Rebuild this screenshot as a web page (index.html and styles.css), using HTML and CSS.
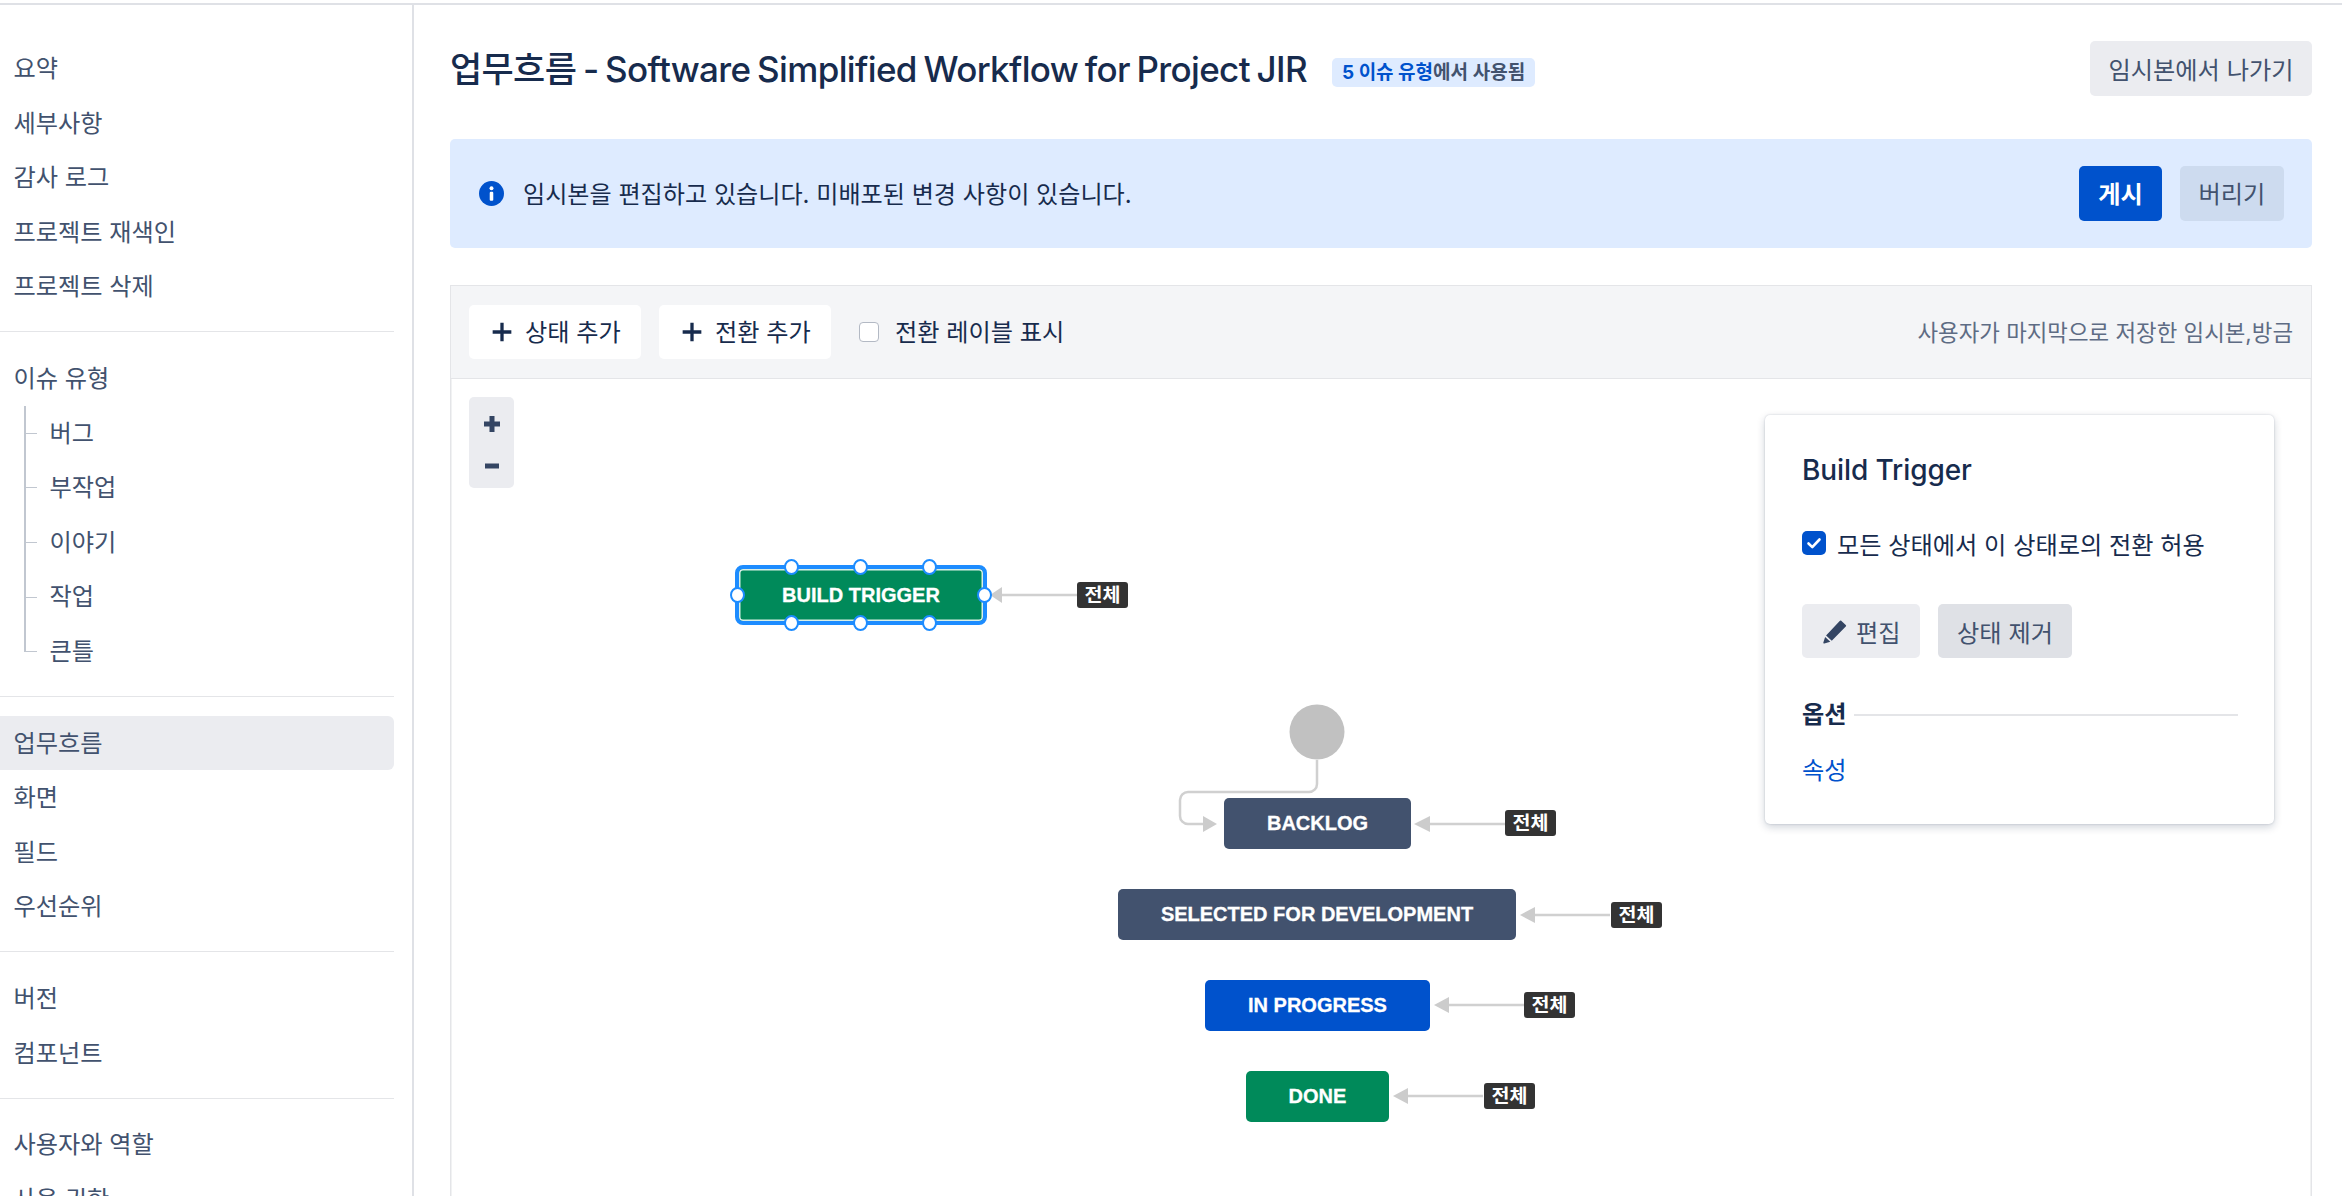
FILE: index.html
```html
<!DOCTYPE html>
<html lang="ko">
<head>
  <meta charset="UTF-8">
  <title>업무흐름 - Software Simplified Workflow for Project JIR</title>
  <link rel="stylesheet" href="styles.css">
</head>
<body>

  <div class="topline"></div>

  <div class="page">
    <nav class="sidebar">
      <ul class="nav-group">
        <li>요약</li>
        <li>세부사항</li>
        <li>감사 로그</li>
        <li>프로젝트 재색인</li>
        <li>프로젝트 삭제</li>
      </ul>
      <ul class="nav-group">
        <li>이슈 유형</li>
        <li class="sub">버그</li>
        <li class="sub">부작업</li>
        <li class="sub">이야기</li>
        <li class="sub">작업</li>
        <li class="sub sub-last">큰틀</li>
      </ul>
      <ul class="nav-group">
        <li class="selected">업무흐름</li>
        <li>화면</li>
        <li>필드</li>
        <li>우선순위</li>
      </ul>
      <ul class="nav-group">
        <li>버전</li>
        <li>컴포넌트</li>
      </ul>
      <ul class="nav-group">
        <li>사용자와 역할</li>
        <li>사용 권한</li>
      </ul>
    </nav>

    <main class="main">
      <header class="header">
        <h1 class="title">업무흐름 - Software Simplified Workflow for Project JIR</h1>
        <span class="badge"><b>5 이슈 유형</b>에서 사용됨</span>
        <button class="btn btn-exit">임시본에서 나가기</button>
      </header>

      <div class="banner">
        <svg class="info-icon" viewBox="0 0 24 24">
          <circle cx="12" cy="12" r="12" fill="#0052cc"/>
          <rect x="10.3" y="10.4" width="3.4" height="8.6" rx="1" fill="#fff"/>
          <circle cx="12" cy="7" r="1.9" fill="#fff"/>
        </svg>
        <span class="banner-text">임시본을 편집하고 있습니다. 미배포된 변경 사항이 있습니다.</span>
        <button class="btn btn-primary">게시</button>
        <button class="btn btn-discard">버리기</button>
      </div>

      <div class="toolbar">
        <button class="btn btn-white">
          <svg class="plus-icon" viewBox="0 0 20 20"><path d="M10 1.5v17M1.5 10h17"/></svg>
          상태 추가
        </button>
        <button class="btn btn-white">
          <svg class="plus-icon" viewBox="0 0 20 20"><path d="M10 1.5v17M1.5 10h17"/></svg>
          전환 추가
        </button>
        <label class="show-labels"><span class="checkbox"></span>전환 레이블 표시</label>
        <span class="saved-note">사용자가 마지막으로 저장한 임시본,방금</span>
      </div>

      <div class="canvas">
        <div class="zoom-box">
          <svg class="zoom-plus" viewBox="0 0 18 18"><path d="M9 1v16M1 9h16"/></svg>
          <svg class="zoom-minus" viewBox="0 0 16 6"><path d="M1 3h14"/></svg>
        </div>

        <svg class="edges" width="1860" height="817">
          <path class="edge" d="M867 381v24a8 8 0 0 1-8 8H738a8 8 0 0 0-8 8v16a8 8 0 0 0 8 8h17"/>
          <path class="edge" d="M552 216h75"/>
          <path class="edge" d="M975 445h80"/>
          <path class="edge" d="M1080 536h80"/>
          <path class="edge" d="M994 626h80"/>
          <path class="edge" d="M953 717h80"/>
          <path class="head" d="M540 216l12-8v16z"/>
          <path class="head" d="M767 445l-14-8v16z"/>
          <path class="head" d="M964 445l16-8v16z"/>
          <path class="head" d="M1070 536l15-8v16z"/>
          <path class="head" d="M984 626l15-8v16z"/>
          <path class="head" d="M943 717l15-8v16z"/>
          <circle cx="867" cy="353" r="27.5" fill="#c1c1c1"/>
        </svg>

        <div class="node node-trigger">BUILD TRIGGER
          <i class="handle h1"></i><i class="handle h2"></i><i class="handle h3"></i>
          <i class="handle h4"></i><i class="handle h5"></i><i class="handle h6"></i>
          <i class="handle h7"></i><i class="handle h8"></i>
        </div>
        <div class="node node-backlog">BACKLOG</div>
        <div class="node node-selected">SELECTED FOR DEVELOPMENT</div>
        <div class="node node-progress">IN PROGRESS</div>
        <div class="node node-done">DONE</div>

        <span class="all-label l1">전체</span>
        <span class="all-label l2">전체</span>
        <span class="all-label l3">전체</span>
        <span class="all-label l4">전체</span>
        <span class="all-label l5">전체</span>

        <aside class="panel">
          <h3 class="panel-title">Build Trigger</h3>
          <div class="panel-check">
            <svg class="check-icon" viewBox="0 0 24 24">
              <rect width="24" height="24" rx="5" fill="#0052cc"/>
              <path d="M6.5 12.5l3.8 3.6 7.2-7.6" fill="none" stroke="#fff" stroke-width="2.6" stroke-linecap="round" stroke-linejoin="round"/>
            </svg>
            모든 상태에서 이 상태로의 전환 허용
          </div>
          <div class="panel-actions">
            <button class="btn btn-edit">
              <svg class="pencil-icon" viewBox="0 0 24 24"><path d="M18.2 1.5l4.6 4.2c.5.5.5 1.1 0 1.6L9.4 20.9 3.9 15.9 17 2c.3-.5.8-.7 1.2-.5zM3 17.2l5 4.6-5.8 1.7c-.6.1-1-.3-.9-.9z"/></svg>
              편집
            </button>
            <button class="btn btn-remove">상태 제거</button>
          </div>
          <div class="panel-section"><b>옵션</b><span class="section-line"></span></div>
          <a class="panel-link">속성</a>
        </aside>
      </div>
    </main>
  </div>

</body>
</html>
```

FILE: styles.css
```css
* {
  box-sizing: border-box;
}

html, body {
  height: 100%;
}

body {
  margin: 0;
  overflow: hidden;
  background-color: #ffffff;
  color: #172b4d;
  font-family: Inter, "Noto Sans CJK KR", sans-serif;
}

button {
  font-family: inherit;
}

.topline {
  height: 5px;
  border-bottom: 2px solid #dfe1e6;
}

.page {
  display: flex;
  height: 1191px;
}

/* sidebar */
.sidebar {
  flex: 0 0 414px;
  padding: 36px 18px 0 0;
  border-right: 2px solid #dfe1e6;
  overflow: hidden;
}

.nav-group {
  list-style: none;
  margin: 0 0 18.5px;
  padding: 0 0 17.5px;
  border-bottom: 1.5px solid #e4e5e8;
}

.nav-group:last-child {
  border-bottom: none;
}

.nav-group li {
  position: relative;
  height: 54.6px;
  padding-left: 13.5px;
  line-height: 55px;
  font-size: 24.2px;
  color: #42526e;
  white-space: nowrap;
}

.nav-group .selected {
  background-color: #ebecf0;
  border-radius: 0 6px 6px 0;
}

.nav-group .sub {
  padding-left: 49.5px;
}

.sub::before {
  content: "";
  position: absolute;
  left: 24px;
  top: 0;
  width: 11px;
  height: 50%;
  border-left: 2px solid #c1c7d0;
  border-bottom: 1.5px solid #c1c7d0;
}

.sub::after {
  content: "";
  position: absolute;
  left: 24px;
  top: 50%;
  height: 50%;
  border-left: 2px solid #c1c7d0;
}

.sub-last::after {
  display: none;
}

/* main column */
.main {
  flex: 1;
  display: flex;
  flex-direction: column;
  padding: 0 30px 0 36px;
  min-width: 0;
}

.header {
  display: flex;
  align-items: center;
  height: 134px;
  padding-bottom: 8px;
}

.title {
  margin: 0 0 3px;
  font-size: 35px;
  font-weight: 500;
  letter-spacing: -0.65px;
  word-spacing: -2px;
  white-space: nowrap;
}

.badge {
  margin: 9px 0 0 25px;
  padding: 0 10px;
  height: 29px;
  line-height: 29px;
  border-radius: 5px;
  background-color: #deebff;
  color: #42526e;
  font-size: 19px;
  font-weight: 600;
  white-space: nowrap;
}

.badge b {
  color: #0052cc;
  font-weight: 700;
}

.btn {
  height: 55px;
  border: none;
  border-radius: 5px;
  padding: 0 20px;
  font-size: 24.2px;
  color: #42526e;
  background-color: #ebecf0;
  white-space: nowrap;
}

.btn-exit {
  margin-left: auto;
  width: 222px;
  padding: 0;
}

.banner {
  display: flex;
  align-items: center;
  flex: 0 0 109px;
  padding: 0 28px 0 29px;
  border-radius: 5px;
  background-color: #deebff;
}

.info-icon {
  width: 25px;
  height: 25px;
  margin-right: 19px;
}

.banner-text {
  flex: 1;
  padding-bottom: 2px;
  font-size: 24.1px;
  color: #172b4d;
}

.btn-primary {
  width: 83px;
  padding: 0 0 2px;
  background-color: #0052cc;
  color: #ffffff;
  font-weight: 600;
}

.btn-discard {
  width: 104px;
  padding: 0 0 2px;
  margin-left: 18px;
  background-color: #cddbef;
}

/* toolbar */
.toolbar {
  display: flex;
  align-items: center;
  flex: 0 0 94px;
  margin-top: 37px;
  padding: 0 18px;
  background-color: #f4f5f7;
  border: 1.5px solid #e4e5e8;
}

.btn-white {
  display: flex;
  align-items: center;
  width: 172px;
  height: 54px;
  padding: 0 0 3px 22px;
  margin-right: 18px;
  background-color: #ffffff;
  color: #172b4d;
}

.plus-icon {
  width: 22px;
  height: 22px;
  margin: 3px 12px 0 0;
  fill: none;
  stroke: #172b4d;
  stroke-width: 3;
}

.show-labels {
  display: flex;
  align-items: center;
  margin-left: 10px;
  padding-bottom: 3px;
  font-size: 24.2px;
  color: #172b4d;
}

.checkbox {
  width: 20px;
  height: 20px;
  margin: 3px 16px 0 0;
  background-color: #ffffff;
  border: 1.5px solid #b3b9c4;
  border-radius: 4px;
}

.saved-note {
  margin-left: auto;
  padding-bottom: 3px;
  font-size: 22.4px;
  color: #5e6c84;
}

/* workflow canvas */
.canvas {
  position: relative;
  flex: 1;
  box-shadow: inset 1.5px 0 #e4e5e8, inset -1.5px 0 #e4e5e8;
}

.zoom-box {
  position: absolute;
  left: 19px;
  top: 18px;
  width: 45px;
  height: 91px;
  display: flex;
  flex-direction: column;
  align-items: center;
  gap: 30px;
  padding-top: 18px;
  border-radius: 5px;
  background-color: #ebecf0;
}

.zoom-plus {
  width: 18px;
  height: 18px;
  fill: none;
  stroke: #344563;
  stroke-width: 5;
}

.zoom-minus {
  width: 16px;
  height: 6px;
  fill: none;
  stroke: #344563;
  stroke-width: 5;
}

.edges {
  position: absolute;
  left: 0;
  top: 0;
}

.edge {
  fill: none;
  stroke: #d0d0d0;
  stroke-width: 2.5;
}

.head {
  fill: #cccccc;
}

.node {
  position: absolute;
  height: 51px;
  display: flex;
  align-items: center;
  justify-content: center;
  border-radius: 5px;
  color: #ffffff;
  font-family: "Liberation Sans", sans-serif;
  font-size: 20px;
  font-weight: 700;
  -webkit-text-stroke: 0.3px #ffffff;
  white-space: nowrap;
}

.node-trigger {
  left: 285px;
  top: 186px;
  width: 252px;
  height: 60px;
  background-color: #008a5a;
  border: 4px solid #1d8cff;
  box-shadow: inset 0 0 0 1.5px #d9efe6;
  border-radius: 8px;
}

.node-backlog {
  left: 774px;
  top: 419px;
  width: 187px;
  background-color: #42526e;
}

.node-selected {
  left: 668px;
  top: 510px;
  width: 398px;
  background-color: #42526e;
}

.node-progress {
  left: 755px;
  top: 601px;
  width: 225px;
  background-color: #0052cc;
}

.node-done {
  left: 796px;
  top: 692px;
  width: 143px;
  background-color: #008a5a;
}

.handle {
  position: absolute;
  width: 15px;
  height: 16px;
  background-color: #ffffff;
  border: 2px solid #1d8cff;
  border-radius: 50%;
}

.h1 { left: 45px; top: -10px; }
.h2 { left: 114px; top: -10px; }
.h3 { left: 183px; top: -10px; }
.h4 { left: 45px; top: 46px; }
.h5 { left: 114px; top: 46px; }
.h6 { left: 183px; top: 46px; }
.h7 { left: -9px; top: 18px; }
.h8 { left: 238px; top: 18px; }

.all-label {
  position: absolute;
  width: 51px;
  height: 26px;
  border-radius: 3px;
  background-color: #333333;
  color: #ffffff;
  font-size: 19.5px;
  font-weight: 700;
  line-height: 26px;
  text-align: center;
}

.l1 { left: 627px; top: 203px; }
.l2 { left: 1055px; top: 431px; }
.l3 { left: 1161px; top: 523px; }
.l4 { left: 1074px; top: 613px; }
.l5 { left: 1034px; top: 704px; }

/* properties panel */
.panel {
  position: absolute;
  left: 1315px;
  top: 36px;
  width: 509px;
  height: 409px;
  padding: 35px 36px 0 37px;
  border-radius: 5px;
  background-color: #ffffff;
  box-shadow: 0 3px 9px rgba(9, 30, 66, 0.2), 0 0 2px rgba(9, 30, 66, 0.2);
}

.panel-title {
  margin: 0;
  font-size: 28px;
  font-weight: 500;
  letter-spacing: -0.1px;
  line-height: 40px;
}

.panel-check {
  display: flex;
  align-items: center;
  margin-top: 39px;
  height: 28px;
  font-size: 24.2px;
}

.check-icon {
  width: 24px;
  height: 24px;
  margin-right: 11px;
}

.panel-actions {
  display: flex;
  margin-top: 47px;
}

.btn-edit {
  display: flex;
  align-items: center;
  width: 118px;
  height: 54px;
  padding: 0 0 0 20px;
  margin-right: 18px;
}

.pencil-icon {
  width: 25px;
  height: 25px;
  margin-right: 9px;
  fill: #344563;
}

.btn-remove {
  width: 134px;
  height: 54px;
  padding: 0;
  background-color: #dfe1e6;
}

.panel-section {
  display: flex;
  align-items: center;
  margin-top: 36px;
  height: 36px;
  font-size: 24.2px;
}

.panel-section b {
  font-weight: 700;
}

.section-line {
  flex: 1;
  margin: 6px 0 0 7px;
  height: 1.5px;
  background-color: #e4e5e8;
}

.panel-link {
  display: block;
  margin-top: 23px;
  line-height: 36px;
  font-size: 24.2px;
  color: #0052cc;
}
```
